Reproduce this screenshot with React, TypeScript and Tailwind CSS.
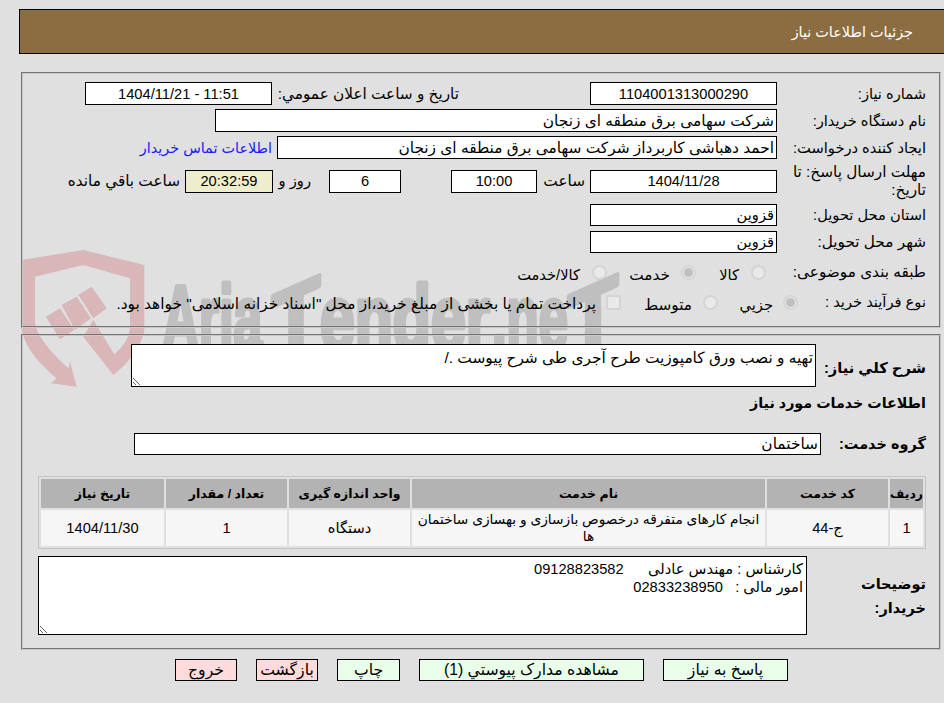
import React from 'react';

const Field: React.FC<{ className?: string; children?: React.ReactNode }> = ({ className = '', children }) => (
  <div className={`h-full shrink-0 border border-black bg-white flex items-center whitespace-nowrap overflow-hidden ${className}`}>
    {children}
  </div>
);

const Radio: React.FC<{ checked?: boolean }> = ({ checked }) => (
  <span className="w-[15px] h-[15px] shrink-0 rounded-full border-2 border-[#d4d4d4] bg-[#e9e9e9] flex items-center justify-center">
    {checked && <span className="w-[9px] h-[9px] rounded-full bg-[#c0c0c0]" />}
  </span>
);

const Watermark = () => (
  <svg className="absolute top-0 left-0 w-[944px] h-[703px]" viewBox="0 0 944 703">
    <g transform="translate(15 240) scale(0.3333)" fill="#d9b6b7">
      <path d="M18 60 L205 30 L388 75 L388 270 C380 320 340 370 295 405 L205 290 L235 240 L298 343 C325 320 345 290 345 255 L345 115 L205 75 L60 110 L60 250 C65 290 120 350 160 385 L165 365 L185 440 L108 430 L125 415 C80 375 30 330 18 260 Z" />
      <path d="M190 165 L230 140 L275 205 L235 235 Z" />
      <path d="M140 195 L185 170 L228 235 L180 270 Z" />
      <path d="M93 230 L135 205 L178 270 L135 298 Z" />
    </g>
    <g direction="ltr" fill="#bfbfbf" stroke="#bfbfbf" strokeWidth="5" strokeLinejoin="round" fontFamily="'Liberation Sans', sans-serif" fontWeight="700" fontSize="92">
      <text x="162" y="350" textLength="100" lengthAdjust="spacingAndGlyphs">Aria</text>
      <text x="272" y="350" textLength="48" lengthAdjust="spacingAndGlyphs" transform="translate(0 131) skewY(-24)">T</text>
      <text x="320" y="350" textLength="170" lengthAdjust="spacingAndGlyphs">ender</text>
      <text x="492" y="350" textLength="76" lengthAdjust="spacingAndGlyphs">.ne</text>
      <text x="568" y="350" textLength="50" lengthAdjust="spacingAndGlyphs" transform="translate(0 263) skewY(-24)">T</text>
    </g>
  </svg>
);

export default function App() {
  return (
    <div dir="rtl" className="relative w-[944px] h-[703px] overflow-hidden bg-[#e0e0e0] text-black text-[15.3px] leading-[18px] font-['Liberation_Sans','DejaVu_Sans',sans-serif]">
      <Watermark />
      <div className="relative pt-[9px]">
        <div className="ml-[19px] h-[45px] border border-black border-r-0 bg-[#8c6d42] text-white text-[14.4px] flex items-center pr-[31px]">
          جزئیات اطلاعات نیاز
        </div>

        <section className="mr-[3px] mt-[18px] w-[920px] h-[256px] border-2 [border-style:groove] border-[#c8c8c8] pt-[8px] pr-[13px]">
          <div className="flex items-center h-[23px]">
            <div className="w-[149px] text-[14.67px]">شماره نیاز:</div>
            <Field className="w-[187px] justify-center text-[14.67px]">1104001313000290</Field>
            <div className="mr-[131px] w-[187px] whitespace-nowrap">تاریخ و ساعت اعلان عمومي:</div>
            <Field className="w-[187px] justify-center text-[14.67px]">11:51 - 1404/11/21</Field>
          </div>
          <div className="flex items-center h-[23px] mt-[4px]">
            <div className="w-[149px] text-[14.67px]">نام دستگاه خریدار:</div>
            <Field className="w-[562px] pr-[2px] text-[15.4px]">شرکت سهامی برق منطقه ای زنجان</Field>
          </div>
          <div className="flex items-center h-[23px] mt-[4px]">
            <div className="w-[149px] text-[14.67px]">ایجاد کننده درخواست:</div>
            <Field className="w-[500px] pr-[2px] text-[15.4px]">احمد دهباشی کاربرداز شرکت سهامی برق منطقه ای زنجان</Field>
            <a className="mr-[5px] text-[#1a1aff] text-[14.4px] whitespace-nowrap">اطلاعات تماس خریدار</a>
          </div>
          <div className="flex items-center h-[36px] mt-[4px]">
            <div className="w-[149px] pl-[3px]">مهلت ارسال پاسخ: تا تاریخ:</div>
            <div className="flex items-center h-[23px]">
              <Field className="w-[187px] justify-center text-[14.67px]">1404/11/28</Field>
              <div className="w-[53px] pr-[5px]">ساعت</div>
              <Field className="w-[86px] justify-center text-[14.67px]">10:00</Field>
              <Field className="w-[72px] justify-center mr-[50px] text-[14.67px]">6</Field>
              <div className="w-[56px] pr-[18px] text-[14.67px]">روز و</div>
              <Field className="w-[88px] justify-center !bg-[#eeeecd] text-[14.67px]">20:32:59</Field>
              <div className="mr-[5px] whitespace-nowrap">ساعت باقي مانده</div>
            </div>
          </div>
          <div className="flex items-center h-[22px] mt-[5px]">
            <div className="w-[149px] text-[14.67px]">استان محل تحویل:</div>
            <Field className="w-[187px] pr-[2px] text-[14.67px]">قزوین</Field>
          </div>
          <div className="flex items-center h-[22px] mt-[5px]">
            <div className="w-[149px]">شهر محل تحویل:</div>
            <Field className="w-[187px] pr-[2px] text-[14.67px]">قزوین</Field>
          </div>
          <div className="flex items-center h-[22px] mt-[8px]">
            <div className="w-[160px] whitespace-nowrap">طبقه بندی موضوعی:</div>
            <Radio />
            <div className="w-[55px] pr-[12px] pt-[6px] text-[14.67px]">کالا</div>
            <Radio checked />
            <div className="w-[74px] pr-[11px] pt-[6px]">خدمت</div>
            <Radio />
            <div className="pr-[12px] pt-[6px] text-[14.67px] whitespace-nowrap">کالا/خدمت</div>
          </div>
          <div className="flex items-center h-[22px] mt-[8px]">
            <div className="w-[128px] text-[14.67px]">نوع فرآیند خرید :</div>
            <Radio checked />
            <div className="w-[65px] pr-[10px] pt-[6px] text-[14.67px]">جزيي</div>
            <Radio />
            <div className="w-[82px] pr-[11px] pt-[6px]">متوسط</div>
            <span className="w-[15px] h-[15px] shrink-0 rounded-[2px] border-2 border-[#d4d4d4] bg-[#e9e9e9]" />
            <div className="pr-[10px] pt-[4px] text-[15.4px] whitespace-nowrap">پرداخت تمام یا بخشی از مبلغ خرید،از محل "اسناد خزانه اسلامی" خواهد بود.</div>
          </div>
        </section>

        <section className="mr-[3px] mt-[6px] w-[920px] h-[316px] border-2 [border-style:groove] border-[#c8c8c8] pt-[8px] pr-[13px]">
          <div className="flex items-center h-[43px]">
            <div className="w-[110px] font-bold text-[14.7px] pt-[5px] whitespace-nowrap">شرح کلي نیاز:</div>
            <textarea
              readOnly
              className="w-[685px] h-[43px] border border-black bg-white outline-none px-[2px] py-[4px] text-[15.4px] leading-[18px] resize"
              value="تهیه و نصب ورق کامپوزیت طرح آجری طی شرح پیوست ./"
            />
          </div>
          <div className="font-bold text-[14.3px] mt-[7px] h-[20px]">اطلاعات خدمات مورد نیاز</div>
          <div className="flex items-center h-[22px] mt-[19px]">
            <div className="w-[105px] font-bold text-[14.5px]">گروه خدمت:</div>
            <Field className="w-[687px] pr-[2px] text-[15.4px]">ساختمان</Field>
          </div>
          <table className="mt-[21px] w-[888px] border border-[#c4c4c4] border-separate border-spacing-[2px] table-fixed text-center text-[14.67px]">
            <colgroup>
              <col className="w-[33px]" />
              <col className="w-[121px]" />
              <col className="w-[353px]" />
              <col className="w-[121px]" />
              <col className="w-[121px]" />
              <col className="w-[123px]" />
            </colgroup>
            <thead>
              <tr className="h-[29px] bg-[#b3b3b3] font-bold text-[12.5px]">
                <th className="p-0">ردیف</th>
                <th className="p-0">کد خدمت</th>
                <th className="p-0">نام خدمت</th>
                <th className="p-0">واحد اندازه گیری</th>
                <th className="p-0">تعداد / مقدار</th>
                <th className="p-0">تاریخ نیاز</th>
              </tr>
            </thead>
            <tbody>
              <tr className="h-[36px] bg-[#f6f6f6]">
                <td className="p-0">1</td>
                <td className="p-0">ج-44</td>
                <td className="p-0 leading-[17px] text-[13.75px]">انجام کارهای متفرقه درخصوص بازسازی و بهسازی ساختمان ها</td>
                <td className="p-0">دستگاه</td>
                <td className="p-0">1</td>
                <td className="p-0">1404/11/30</td>
              </tr>
            </tbody>
          </table>
          <div className="flex items-center h-[79px] mt-[7px]">
            <div className="w-[119px] font-bold text-[14.5px] leading-[24px] pl-[45px] shrink-0">توضیحات خریدار:</div>
            <textarea
              readOnly
              className="w-[769px] h-[79px] border border-black bg-white outline-none px-[3px] py-[3px] text-[14.67px] leading-[18px] resize"
              value={'کارشناس : مهندس عادلی      09128823582\nامور مالی :   02833238950'}
            />
          </div>
        </section>

        <div className="flex mt-[9px] mr-[156px] gap-[19px] h-[22px] text-[15.7px]">
          <button className="w-[125px] border border-black bg-[#eaffea]">پاسخ به نیاز</button>
          <button className="w-[225px] border border-black bg-[#eaffea]">مشاهده مدارک پیوستي (1)</button>
          <button className="w-[63px] border border-black bg-[#eaffea]">چاپ</button>
          <button className="w-[62px] border border-black bg-[#ffdcdc]">بازگشت</button>
          <button className="w-[62px] border border-black bg-[#ffdcdc]">خروج</button>
        </div>
      </div>
    </div>
  );
}
